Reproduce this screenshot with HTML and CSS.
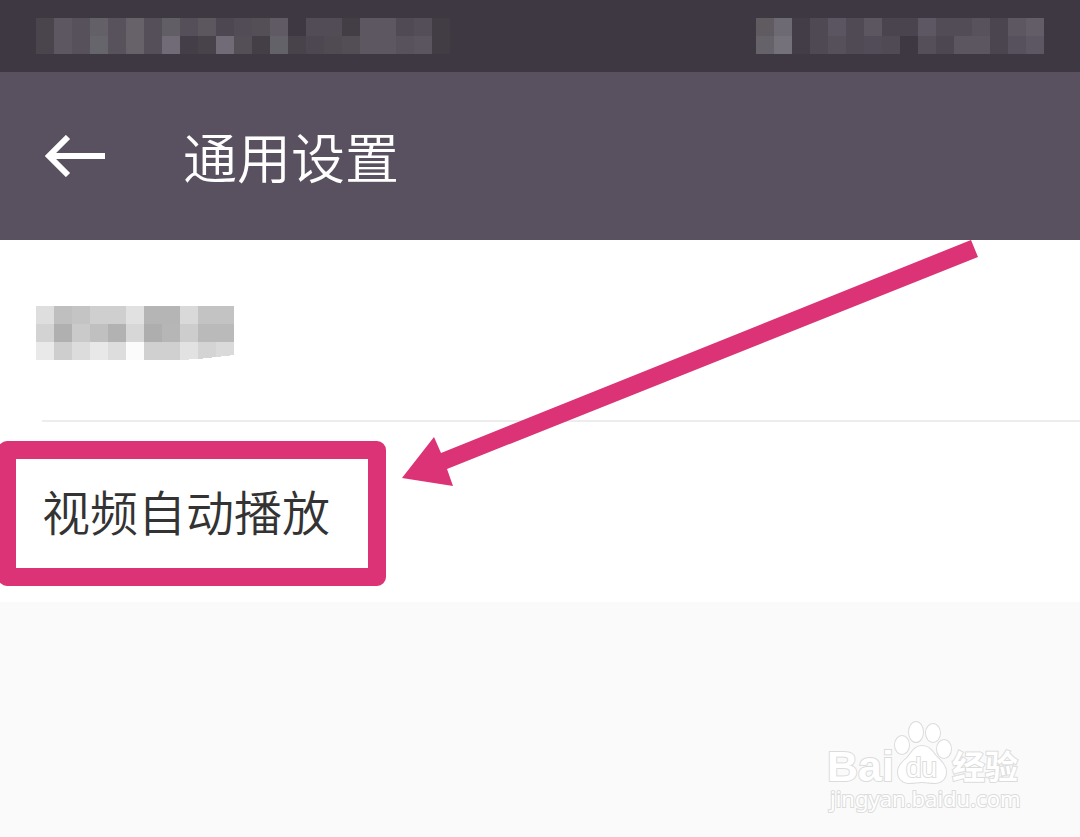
FILE: index.html
```
<!DOCTYPE html>
<html lang="zh-CN">
<head>
<meta charset="utf-8">
<meta name="viewport" content="width=device-width, initial-scale=1">
<title>通用设置</title>
<link rel="stylesheet" href="styles.css">
</head>
<body>
<div class="page">
  <div class="status-bar" aria-hidden="true">
    <svg class="mosaic" width="414" height="36" viewBox="0 0 23 2" shape-rendering="crispEdges">
      <path fill="#4a444c" d="M0 0h1v2h-1z"/><path fill="#5d5761" d="M1 0h1v2h-1z"/><path fill="#56515b" d="M2 0h1v2h-1z"/>
      <path fill="#646068" d="M3 0h1v1h-1z"/><path fill="#67656c" d="M3 1h1v1h-1z"/><path fill="#57525c" d="M4 0h1v2h-1z"/>
      <path fill="#67626a" d="M5 0h1v2h-1z"/><path fill="#544f59" d="M6 0h1v2h-1z"/><path fill="#625e66" d="M7 0h1v1h-1z"/>
      <path fill="#706b76" d="M7 1h1v1h-1zM10 1h1v1h-1z"/><path fill="#544f59" d="M8 0h1v1h-1z"/><path fill="#433e47" d="M8 1h1v1h-1z"/>
      <path fill="#5c575f" d="M9 0h1v1h-1z"/><path fill="#48434a" d="M9 1h1v1h-1z"/><path fill="#4c4751" d="M10 0h1v1h-1z"/>
      <path fill="#514c55" d="M11 0h1v1h-1z"/><path fill="#544f57" d="M11 1h1v1h-1zM12 0h1v1h-1z"/><path fill="#443e47" d="M12 1h1v1h-1z"/>
      <path fill="#5f5a63" d="M13 0h1v1h-1z"/><path fill="#636269" d="M13 1h1v1h-1z"/><path fill="#48434b" d="M14 1h1v1h-1z"/>
      <path fill="#514c55" d="M15 0h2v1h-2z"/><path fill="#4c4750" d="M15 1h1v1h-1z"/><path fill="#504b53" d="M16 1h1v1h-1z"/>
      <path fill="#433d45" d="M17 0h1v1h-1z"/><path fill="#534e56" d="M17 1h1v1h-1z"/><path fill="#5c5760" d="M18 0h2v2h-2z"/>
      <path fill="#4f4a53" d="M20 0h1v1h-1z"/><path fill="#57525b" d="M20 1h1v1h-1z"/><path fill="#534e57" d="M21 0h1v1h-1z"/>
      <path fill="#5a555e" d="M21 1h1v1h-1z"/><path fill="#423d45" d="M22 0h1v2h-1z"/>
    </svg>
    <svg class="mosaic" width="288" height="36" viewBox="0 0 16 2" shape-rendering="crispEdges">
      <path fill="#605b61" d="M0 0h1v1h-1z"/><path fill="#66626a" d="M0 1h1v1h-1z"/><path fill="#6e6a74" d="M1 0h1v1h-1z"/>
      <path fill="#75717b" d="M1 1h1v1h-1z"/><path fill="#433d48" d="M2 0h1v2h-1z"/><path fill="#4f4954" d="M3 0h1v2h-1z"/>
      <path fill="#5a5560" d="M4 0h1v1h-1z"/><path fill="#55505a" d="M4 1h1v1h-1z"/><path fill="#504a55" d="M5 0h1v2h-1z"/>
      <path fill="#5b5660" d="M6 0h1v1h-1z"/><path fill="#524c58" d="M6 1h1v1h-1z"/><path fill="#4a444f" d="M7 0h2v1h-2z"/>
      <path fill="#4f4a54" d="M7 1h1v1h-1z"/><path fill="#5c5762" d="M9 0h1v1h-1z"/><path fill="#544f58" d="M9 1h1v1h-1z"/>
      <path fill="#524c57" d="M10 0h2v1h-2z"/><path fill="#4d4751" d="M10 1h1v1h-1z"/><path fill="#5b5660" d="M11 1h2v1h-2z"/>
      <path fill="#57525c" d="M12 0h1v1h-1z"/><path fill="#4b4550" d="M13 0h1v2h-1z"/><path fill="#5c5761" d="M14 0h1v1h-1z"/>
      <path fill="#57515d" d="M14 1h1v1h-1z"/><path fill="#625d67" d="M15 0h1v1h-1z"/><path fill="#5d5763" d="M15 1h1v1h-1z"/>
    </svg>
  </div>

  <header class="app-bar">
    <button class="back" type="button" aria-label="返回">
      <svg width="60" height="42" viewBox="0 0 60 42" fill="none" stroke="#fff" stroke-width="6">
        <path d="M60 21H5M23 2L4 21l19 19"/>
      </svg>
    </button>
    <h1 class="title">通用设置</h1>
  </header>

  <main class="settings">
    <div class="row">
      <svg class="mosaic" width="198" height="54" viewBox="0 0 198 54" shape-rendering="crispEdges" aria-hidden="true">
        <path fill="#dedede" d="M0 0h18v18H0z"/><path fill="#bfbfbf" d="M18 0h18v18H18z"/><path fill="#c4c4c4" d="M36 0h18v18H36z"/>
        <path fill="#cfcfcf" d="M54 0h36v18H54z"/><path fill="#e1e1e1" d="M90 0h18v18H90z"/><path fill="#b5b5b5" d="M108 0h36v18h-36z"/>
        <path fill="#d9d9d9" d="M144 0h18v18h-18z"/><path fill="#c3c3c3" d="M162 0h36v18h-36z"/>
        <path fill="#d3d3d3" d="M0 18h18v18H0z"/><path fill="#b0b0b0" d="M18 18h18v18H18z"/><path fill="#cacaca" d="M36 18h18v18H36z"/>
        <path fill="#c0c0c0" d="M54 18h18v18H54z"/><path fill="#b2b2b2" d="M72 18h18v18H72z"/><path fill="#d7d7d7" d="M90 18h18v18H90z"/>
        <path fill="#aeaeae" d="M108 18h18v18h-18z"/><path fill="#b6b6b6" d="M126 18h18v18h-18z"/><path fill="#cdcdcd" d="M144 18h18v18h-18z"/>
        <path fill="#bababa" d="M162 18h36v18h-36z"/>
        <path fill="#e9e9e9" d="M0 36h18v18H0z"/><path fill="#cecece" d="M18 36h18v18H18z"/><path fill="#dcdcdc" d="M36 36h18v18H36z"/>
        <path fill="#e8e8e8" d="M54 36h18v18H54z"/><path fill="#dddddd" d="M72 36h18v18H72z"/><path fill="#fbfbfb" d="M90 36h18v18H90z"/>
        <path fill="#d0d0d0" d="M108 36h36v18h-36z"/><path fill="#e2e2e2" d="M144 36h18v17l-18 1z"/><path fill="#d4d4d4" d="M162 36h18v15l-18 2z"/>
        <path fill="#dadada" d="M180 36h18v13l-18 2z"/>
      </svg>
    </div>
    <hr class="divider">
    <div class="row row-video">
      <span class="label">视频自动播放</span>
      <span class="highlight" aria-hidden="true"></span>
      <svg class="arrow" width="580" height="246" viewBox="0 0 580 246" fill="#db3375" aria-hidden="true">
        <path d="M0 238L32 197l7 16L569 0l7 17L45 229l6 17z"/>
      </svg>
    </div>
  </main>

  <footer class="footer">
    <svg class="watermark" width="210" height="100" viewBox="0 0 210 100" role="img" aria-label="Baidu 经验 jingyan.baidu.com">
      <g class="mark">
        <text class="brand" x="7" y="65">Bai</text>
        <ellipse cx="82" cy="29" rx="7" ry="9"/>
        <ellipse cx="96" cy="16" rx="7" ry="10"/>
        <ellipse cx="113" cy="17" rx="7" ry="9"/>
        <ellipse cx="124" cy="33" rx="7" ry="9"/>
        <path d="M102 30c-7 0-10 6-14 11-4 4-10 8-10 15 0 7 5 11 11 11 5 0 9-1 13-1s8 1 13 1c6 0 11-4 11-11 0-6-5-11-10-16-4-5-7-10-14-10z"/>
        <text class="du" x="86" y="61">du</text>
        <text class="cjk" x="132" y="63">经验</text>
        <text class="url" x="10" y="91">jingyan.baidu.com</text>
      </g>
    </svg>
  </footer>
</div>
</body>
</html>
```
FILE: styles.css
```
* {
  box-sizing: border-box;
}

body {
  margin: 0;
  background: #fafafa;
  color: #333;
  font-family: "Noto Sans CJK SC DemiLight", "Noto Sans CJK SC", sans-serif;
  font-weight: 350;
}

.page {
  display: flex;
  flex-direction: column;
  min-height: 100vh;
  overflow: hidden;
}

.mosaic {
  display: block;
  flex: none;
}

.status-bar {
  display: flex;
  justify-content: space-between;
  padding: 18px 36px;
  background: #3e3842;
}

.app-bar {
  display: flex;
  align-items: center;
  gap: 78px;
  height: 168px;
  padding: 0 45px;
  background: #595060;
  color: #fff;
}

.back {
  padding: 0;
  border: 0;
  background: none;
  cursor: pointer;
}

.back svg {
  display: block;
}

.title {
  margin: 0;
  font-size: 54px;
  font-weight: 350;
  line-height: 80px;
}

.settings {
  background: #fff;
}

.row {
  display: flex;
  align-items: center;
  height: 180px;
  padding: 6px 36px 0;
}

.row-video {
  position: relative;
  padding: 0 42px 4px;
}

.divider {
  height: 2px;
  margin: 0 0 0 42px;
  border: 0;
  background: #ededed;
}

.label {
  font-size: 48px;
  line-height: 72px;
}

.highlight {
  position: absolute;
  top: 19px;
  left: -2px;
  width: 388px;
  height: 145px;
  border: 18px solid #db3375;
  border-radius: 9px;
}

.arrow {
  position: absolute;
  top: -182px;
  left: 402px;
}

.footer {
  display: flex;
  flex: 1;
  align-items: flex-end;
  justify-content: flex-end;
  padding: 0 50px 21px;
}

.watermark {
  display: block;
}

.mark {
  fill: #fff;
  stroke: #dcdcdc;
  stroke-width: 2px;
  paint-order: stroke;
}

.brand {
  font: 700 43px "Liberation Sans", sans-serif;
}

.du {
  font: 400 28px "Liberation Sans", sans-serif;
}

.cjk {
  font: 700 33px "Noto Sans CJK SC", sans-serif;
}

.url {
  font: 400 22px "Noto Sans", sans-serif;
}
```
